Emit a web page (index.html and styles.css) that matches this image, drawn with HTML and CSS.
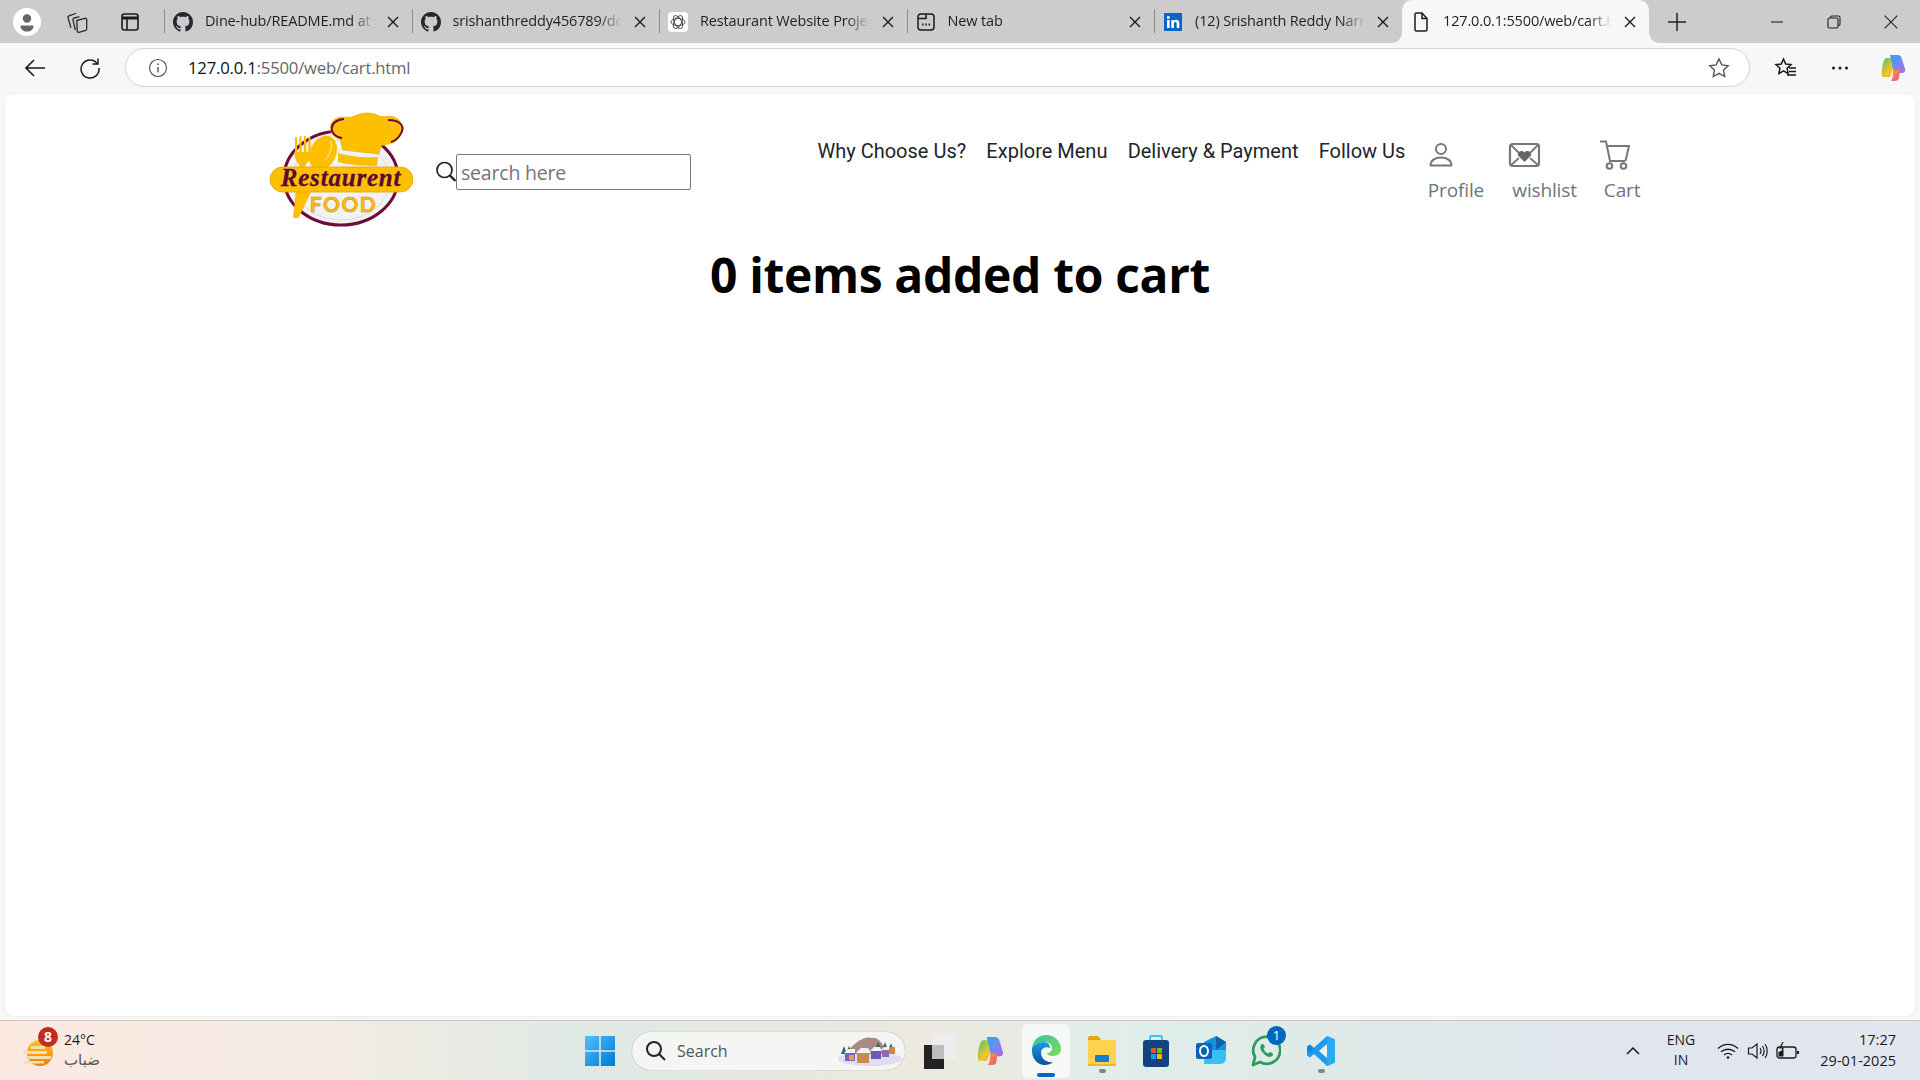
FILE: index.html
```html
<!DOCTYPE html>
<html lang="en">
<head>
<meta charset="utf-8">
<title>Cart</title>
<link rel="stylesheet" href="styles.css">
</head>
<body>
<div class="tabstrip">
  <div class="strip-left">
    <span class="avatar"><svg width="28" height="28" viewBox="0 0 28 28"><circle cx="14" cy="14" r="14" fill="#fff"/><circle cx="14" cy="10.500" r="4.200" fill="#666"/><path d="M7.500 17.500h13c0 4-3 6-6.500 6s-6.500-2-6.500-6z" fill="#666"/></svg></span>
    <svg class="ico" width="22" height="22" viewBox="0 0 22 22" fill="none" stroke="#2a2a2a" stroke-width="1.300" stroke-linecap="round" stroke-linejoin="round"><path d="M10.800 9.500 19 7.300c1-.2 1.700.4 1.700 1.300v9.300c0 .8-.4 1.200-1 1.400l-6.700 2c-1 .2-1.600-.3-1.800-1.200z"/><path d="M13 5.800 8 7c-1 .3-1.300 1-1 2l2.200 9.500"/><path d="M9.500 2.500 3 4.800c-1 .4-1.300 1-1 2l2.800 9.500"/></svg>
    <svg class="ico" width="20" height="20" viewBox="0 0 20 20" fill="none" stroke="#1a1a1a" stroke-width="1.600"><rect x="2" y="2" width="16" height="16" rx="2.500"/><path d="M2 6h16" stroke-width="3"/><path d="M7 6v12"/></svg>
  </div>
  <div class="tab"><i class="sep"></i><svg class="fav" width="20" height="20" viewBox="0 0 16 16"><path fill="#24292f" d="M8 0C3.580 0 0 3.580 0 8c0 3.540 2.290 6.530 5.470 7.590.4.070.55-.17.55-.38 0-.19-.010-.82-.010-1.490-2.010.37-2.530-.49-2.690-.94-.090-.23-.48-.94-.82-1.130-.28-.15-.68-.52-.010-.53.630-.010 1.080.58 1.230.82.720 1.210 1.870.87 2.330.66.070-.52.280-.87.510-1.070-1.780-.2-3.640-.89-3.640-3.950 0-.87.310-1.590.82-2.150-.080-.2-.36-1.020.080-2.120 0 0 .67-.21 2.200.82.640-.18 1.320-.27 2-.27s1.360.090 2 .27c1.530-1.040 2.200-.82 2.200-.82.440 1.100.16 1.920.080 2.120.51.560.82 1.270.82 2.150 0 3.070-1.870 3.750-3.650 3.950.29.250.54.730.54 1.480 0 1.070-.010 1.930-.010 2.200 0 .21.150.46.550.38A8.010 8.010 0 0 0 16 8c0-4.420-3.580-8-8-8z"/></svg><span class="title">Dine-hub/README.md at</span><svg class="x" width="12" height="12" viewBox="0 0 12 12"><path d="M1 1l10 10M11 1 1 11" stroke="#1a1a1a" stroke-width="1.400"/></svg></div>
  <div class="tab"><i class="sep"></i><svg class="fav" width="20" height="20" viewBox="0 0 16 16"><path fill="#24292f" d="M8 0C3.580 0 0 3.580 0 8c0 3.540 2.290 6.530 5.470 7.590.4.070.55-.17.55-.38 0-.19-.010-.82-.010-1.490-2.010.37-2.530-.49-2.690-.94-.090-.23-.48-.94-.82-1.130-.28-.15-.68-.52-.010-.53.630-.010 1.080.58 1.230.82.720 1.210 1.870.87 2.330.66.070-.52.280-.87.510-1.070-1.780-.2-3.640-.89-3.640-3.950 0-.87.310-1.590.82-2.150-.080-.2-.36-1.020.080-2.120 0 0 .67-.21 2.200.82.640-.18 1.320-.27 2-.27s1.360.090 2 .27c1.530-1.040 2.200-.82 2.200-.82.440 1.100.16 1.920.080 2.120.51.560.82 1.270.82 2.150 0 3.070-1.870 3.750-3.650 3.950.29.250.54.730.54 1.480 0 1.070-.010 1.930-.010 2.200 0 .21.150.46.550.38A8.010 8.010 0 0 0 16 8c0-4.420-3.580-8-8-8z"/></svg><span class="title">srishanthreddy456789/do</span><svg class="x" width="12" height="12" viewBox="0 0 12 12"><path d="M1 1l10 10M11 1 1 11" stroke="#1a1a1a" stroke-width="1.400"/></svg></div>
  <div class="tab"><i class="sep"></i><svg class="fav" width="20" height="20" viewBox="0 0 20 20"><rect width="20" height="20" rx="4" fill="#fff"/><g fill="none" stroke="#444" stroke-width=".9"><ellipse cx="10" cy="10" rx="7" ry="3.600"/><ellipse cx="10" cy="10" rx="7" ry="3.600" transform="rotate(60 10 10)"/><ellipse cx="10" cy="10" rx="7" ry="3.600" transform="rotate(120 10 10)"/></g></svg><span class="title">Restaurant Website Projec</span><svg class="x" width="12" height="12" viewBox="0 0 12 12"><path d="M1 1l10 10M11 1 1 11" stroke="#1a1a1a" stroke-width="1.400"/></svg></div>
  <div class="tab"><i class="sep"></i><svg class="fav" width="20" height="20" viewBox="0 0 20 20" fill="none" stroke="#1a1a1a" stroke-width="1.500"><rect x="2" y="2" width="16" height="16" rx="3"/><path d="M2 6.500h8V2"/><path d="M6 12.500h1.500M9.300 12.500h1.500M12.600 12.500h1.500" stroke-width="1.800"/></svg><span class="title">New tab</span><svg class="x" width="12" height="12" viewBox="0 0 12 12"><path d="M1 1l10 10M11 1 1 11" stroke="#1a1a1a" stroke-width="1.400"/></svg></div>
  <div class="tab"><i class="sep"></i><svg class="fav" width="20" height="20" viewBox="0 0 20 20"><rect x="1" y="1" width="18" height="18" fill="#0a66c2"/><path d="M4 8h2.600v8H4zM4 4.300h2.600v2.400H4zM8.300 8h2.500v1.200c.5-.9 1.400-1.400 2.500-1.400 2 0 3 1.200 3 3.500V16h-2.600v-4.200c0-1.100-.4-1.700-1.300-1.700-1 0-1.500.7-1.500 1.800V16H8.300z" fill="#fff"/></svg><span class="title">(12) Srishanth Reddy Narr</span><svg class="x" width="12" height="12" viewBox="0 0 12 12"><path d="M1 1l10 10M11 1 1 11" stroke="#1a1a1a" stroke-width="1.400"/></svg></div>
  <div class="tab active"><svg class="fav" width="20" height="20" viewBox="0 0 20 20" fill="none" stroke="#1a1a1a" stroke-width="1.500"><path d="M4 2.500A1.500 1.500 0 0 1 5.500 1H11l5 5.500v11a1.500 1.500 0 0 1-1.500 1.500h-9A1.500 1.500 0 0 1 4 17.500z"/><path d="M11 1v5.500h5"/></svg><span class="title">127.0.0.1:5500/web/cart.h</span><svg class="x" width="12" height="12" viewBox="0 0 12 12"><path d="M1 1l10 10M11 1 1 11" stroke="#1a1a1a" stroke-width="1.400"/></svg></div>
  <svg class="plus" width="18" height="18" viewBox="0 0 18 18"><path d="M9 0v18M0 9h18" stroke="#222" stroke-width="1.500"/></svg>
  <div class="winbtns">
    <svg width="14" height="14" viewBox="0 0 14 14"><path d="M1 7h12" stroke="#222" stroke-width="1.100"/></svg>
    <svg width="14" height="14" viewBox="0 0 14 14" fill="none" stroke="#222" stroke-width="1.100"><rect x="1" y="3" width="10" height="10" rx="1.500"/><path d="M3.500 3V2.200C3.500 1.500 4 1 4.700 1h6.800C12.300 1 13 1.700 13 2.500v6.800c0 .7-.5 1.200-1.200 1.200H11"/></svg>
    <svg width="14" height="14" viewBox="0 0 14 14"><path d="M.7.700l12.600 12.600M13.300.700.700 13.300" stroke="#222" stroke-width="1.100"/></svg>
  </div>
</div>

<div class="toolbar">
  <svg class="nav-ico back" width="22" height="20" viewBox="0 0 22 20" fill="none" stroke="#1a1a1a" stroke-width="1.600"><path d="M21 10H2M10 2l-8 8 8 8"/></svg>
  <svg class="nav-ico reload" width="22" height="22" viewBox="0 0 22 22" fill="none" stroke="#1a1a1a" stroke-width="1.500"><path d="M18.500 7A9 9 0 1 0 20 11"/><path d="M19 1.500V7h-5.500"/></svg>
  <div class="addr">
    <svg width="20" height="20" viewBox="0 0 20 20" fill="none" stroke="#555" stroke-width="1.200"><circle cx="10" cy="10" r="8.500"/><path d="M10 9v5.500" stroke-width="1.400"/><circle cx="10" cy="6.200" r=".9" fill="#555" stroke="none"/></svg>
    <span class="url"><b>127.0.0.1</b>:5500/web/cart.html</span>
    <svg class="star" width="22" height="22" viewBox="0 0 22 22" fill="none" stroke="#555" stroke-width="1.400"><path d="M11 2l2.800 5.900 6.400.8-4.700 4.400 1.200 6.400L11 16.300l-5.700 3.200 1.200-6.400L1.800 8.700l6.400-.8z"/></svg>
  </div>
  <svg class="favs" width="24" height="22" viewBox="0 0 24 22" fill="none" stroke="#1a1a1a" stroke-width="1.500"><path d="M9.500 2l2.200 5 5.300.6-3.900 3.700 1 5.300-4.600-2.700-4.600 2.700 1-5.300L2 7.600 7.300 7z"/><path d="M15 11h7M15 14.500h7M13 18h9" stroke-width="1.300"/></svg>
  <svg class="more" width="18" height="4" viewBox="0 0 18 4" fill="#1a1a1a"><circle cx="2.500" cy="2" r="1.500"/><circle cx="9" cy="2" r="1.500"/><circle cx="15.500" cy="2" r="1.500"/></svg>
  <svg class="copilot" width="28" height="28" viewBox="0 0 28 28"><defs><linearGradient id="cp1" x1="0" y1="0" x2="1" y2="1"><stop offset="0" stop-color="#2aa6f0"/><stop offset=".5" stop-color="#6a8ef5"/><stop offset="1" stop-color="#c05fe0"/></linearGradient><linearGradient id="cp2" x1="0" y1="0" x2="1" y2="1"><stop offset="0" stop-color="#46c46a"/><stop offset=".6" stop-color="#f5c52e"/><stop offset="1" stop-color="#f58a2e"/></linearGradient><linearGradient id="cp3" x1="0" y1="0" x2="1" y2="1"><stop offset="0" stop-color="#f5a23a"/><stop offset="1" stop-color="#ee4f7e"/></linearGradient></defs><path d="M7 4h7c1.500 0 2.500.8 3 2l-6 17H3C2 16 4 6 7 4z" fill="url(#cp2)"/><path d="M11 1h8c2 0 3 1 4 4l3 10c.5 2-.5 4-3 4h-8z" fill="url(#cp1)"/><path d="M14 16h7l-1 8c-.5 2-2 3-4 3h-4c2-2 2-8 2-11z" fill="url(#cp3)"/></svg>
</div>

<main class="page">
  <header class="site-head">
    <svg class="logo" width="146" height="116" viewBox="0 0 146 116">
      <ellipse cx="73" cy="66" rx="57" ry="47" fill="#f1f2f2" stroke="#6e0a3c" stroke-width="3"/>
      <ellipse cx="73" cy="68" rx="49" ry="40" fill="none" stroke="#e6c9d4" stroke-width=".7"/>
      <g fill="none" stroke="#fdbf00" stroke-width="2.200" stroke-linecap="round"><path d="M28 26v16M32.500 25v17M37 25v17M41.500 26v16"/></g>
      <path d="M26.500 40h16.500c0 6-2 10-5 12l-2 8h-4l-1-8c-3-2-4.500-6-4.500-12z" fill="#fdbf00"/>
      <path d="M28 78h8l-5 28h-6zM36 78h8l-13 27z" fill="#fdbf00"/>
      <ellipse cx="55" cy="41" rx="13" ry="18" fill="#fdbf00" transform="rotate(25 55 41)"/>
      <path d="M62 29c3 4 1 13-5 19" fill="none" stroke="#fff" stroke-width=".7"/>
      <path d="M47 55l5 3-4 8h-6z" fill="#fdbf00"/>
      <path d="M75 38 72 27C60 25 58 6 74 5c5 0 9 1 13-1 7-4 18-4 24 0 4 2 10-1 15 1 12 4 10 22-2 26l-11 3-2 8z" fill="#fdbf00" stroke="#e8a300" stroke-width=".6"/>
      <path d="M70 41c13 4 27 5 40 4l-1 9c-14 0-28-1-39-4z" fill="#fdbf00"/>
      <path d="M74 26C60 24 60 8 76 7" fill="none" stroke="#6e0a3c" stroke-width="2"/>
      <path d="M120 8c13 0 18 7 12 15-2 3-5 6-9 7" fill="none" stroke="#6e0a3c" stroke-width="2"/>
      <rect x="2" y="55" width="143" height="25" rx="12.500" fill="#fdbf00" stroke="#e8a300" stroke-width=".8"/>
      <text x="73" y="74" class="logo-script" text-anchor="middle">Restaurent</text>
      <text x="75.500" y="100" class="logo-food" text-anchor="middle">FOOD</text>
    </svg>
    <div class="search">
      <svg width="22" height="24" viewBox="0 0 22 24" fill="none" stroke="#222" stroke-width="1.700"><circle cx="9.500" cy="10" r="7.500"/><path d="M15 15.500l5.500 5.500" stroke-width="2.400"/></svg>
      <div class="search-box">search here</div>
    </div>
    <nav class="site-nav">
      <a>Why Choose Us?</a>
      <a>Explore Menu</a>
      <a>Delivery &amp; Payment</a>
      <a>Follow Us</a>
    </nav>
    <div class="actions">
      <div class="action a-profile">
        <svg width="26" height="26" viewBox="0 0 26 26" fill="none" stroke="#777" stroke-width="2"><circle cx="13" cy="7" r="5"/><path d="M2.500 23.500c0-5 4.500-8 10.500-8s10.500 3 10.500 8z" stroke-linejoin="round"/></svg>
        <span>Profile</span>
      </div>
      <div class="action a-wish">
        <svg width="32" height="26" viewBox="0 0 32 26" fill="none" stroke="#777" stroke-width="2.200"><rect x="2" y="2" width="29" height="22" rx="2.500"/><path d="M3 3l8 8M30 3l-8 8M3 23l8-7M30 23l-8-7" stroke-width="1.800"/><path d="M16.500 20l-6-6c-2.500-3.500 3-7 6-3.500 3-3.500 8.500 0 6 3.500z" fill="#666" stroke="none"/></svg>
        <span>wishlist</span>
      </div>
      <div class="action a-cart">
        <svg width="30" height="30" viewBox="0 0 30 30" fill="none" stroke="#777" stroke-width="2"><path d="M0 1.500h6l4 19.500h15"/><path d="M6 6h23l-3.500 15"/><circle cx="9.500" cy="26" r="2.800"/><circle cx="23.500" cy="26" r="2.800"/></svg>
        <span>Cart</span>
      </div>
    </div>
  </header>
  <h1 class="cart-title">0 items added to cart</h1>
</main>

<footer class="taskbar">
  <div class="tb-left">
    <div class="weather">
      <svg width="30" height="30" viewBox="0 0 30 30"><defs><linearGradient id="sun" x1="0" y1="0" x2="0" y2="1"><stop offset="0" stop-color="#fbc02d"/><stop offset="1" stop-color="#f57c00"/></linearGradient></defs><circle cx="17" cy="15" r="13" fill="url(#sun)"/><path d="M0 13h24v3H0zM3 18h25v3H3zM1 23h20v2.500H1zM8 8h14v3H8z" fill="#f3dfb0"/></svg>
      <b class="wbadge">8</b>
    </div>
    <div class="wtext"><span>24°C</span><span class="ar">ضباب</span></div>
  </div>
  <div class="tb-center">
    <svg class="win" width="30" height="30" viewBox="0 0 30 30"><defs><linearGradient id="wg" x1="0" y1="0" x2="1" y2="1"><stop offset="0" stop-color="#4cc2ff"/><stop offset="1" stop-color="#0078d4"/></linearGradient></defs><path d="M0 0h14.200v14.200H0zM15.800 0H30v14.200H15.800zM0 15.800h14.200V30H0zM15.800 15.800H30V30H15.800z" fill="url(#wg)"/></svg>
    <div class="tsearch">
      <svg width="21" height="21" viewBox="0 0 21 21" fill="none" stroke="#222" stroke-width="2"><circle cx="9" cy="9" r="7"/><path d="M14 14l6 6"/></svg>
      <span>Search</span>
      <svg class="scene" width="64" height="30" viewBox="0 0 64 30"><ellipse cx="32" cy="23" rx="32" ry="7" fill="#dfdcf3"/><path d="M11 14C18 5 28 0 33 2c6-1 11 4 14 11v5H11z" fill="#a98a80"/><path d="M3 18l3-8 3 8zM8 17l3-7 3 7zM44 14l3-8 3 8zM50 15l3-8 3 8zM38 12l2-6 3 6z" fill="#2c6b60"/><rect x="7" y="17" width="10" height="8" fill="#7a62b5"/><path d="M6 17l4-4h7v4z" fill="#f2f0fa"/><rect x="11" y="19" width="5" height="5" fill="#e5a04a"/><rect x="19" y="16" width="12" height="11" fill="#c58c4c"/><path d="M18 17l5-5h7l3 5z" fill="#f2f0fa"/><rect x="33" y="15" width="10" height="8" fill="#6a5bb0"/><path d="M32 15l4-4h6l2 4z" fill="#f2f0fa"/><rect x="44" y="14" width="7" height="7" fill="#8f6ba8"/><path d="M43 14l3-3h4l2 3z" fill="#f2f0fa"/><rect x="51" y="11" width="6" height="7" fill="#c58c4c"/></svg>
    </div>
    <svg class="tapp t-view" width="32" height="36" viewBox="0 0 32 36"><rect x="8" y="0" width="24" height="25" fill="#f4f4f4"/><rect x="8" y="0" width="24" height="25" fill="#e8e8e8" opacity=".6"/><rect x="0" y="11" width="20" height="24" fill="#222"/><rect x="8" y="11" width="12" height="14" fill="#bdbdbd"/></svg>
    <svg class="tapp t-cop" width="30" height="30" viewBox="0 0 28 28"><path d="M7 4h7c1.500 0 2.500.8 3 2l-6 17H3C2 16 4 6 7 4z" fill="url(#cp2)"/><path d="M11 1h8c2 0 3 1 4 4l3 10c.5 2-.5 4-3 4h-8z" fill="url(#cp1)"/><path d="M14 16h7l-1 8c-.5 2-2 3-4 3h-4c2-2 2-8 2-11z" fill="url(#cp3)"/></svg>
    <div class="tedge">
      <svg width="32" height="32" viewBox="0 0 32 32"><defs><linearGradient id="eg1" x1="0" y1="0" x2="1" y2="1"><stop offset="0" stop-color="#36c5a0"/><stop offset="1" stop-color="#7edc5c"/></linearGradient><linearGradient id="eg2" x1="0" y1="0" x2="0" y2="1"><stop offset="0" stop-color="#1b9de2"/><stop offset="1" stop-color="#0c4f9e"/></linearGradient></defs><path d="M2 14C3 6 9 1 16 1c8 0 15 6 15 14 0 5-4 7-8 7-3 0-6-1-6-3 3 0 5-2 5-5 0-4-4-6-8-6-6 0-10 3-12 6z" fill="url(#eg1)"/><path d="M2 14c2-3 6-6 11-6 4 0 7 2 7 6-4-2-9 0-9 5 0 5 5 10 12 9-2 2-5 3-8 3C7 31 1 24 2 14z" fill="url(#eg2)"/></svg>
      <i class="run-on"></i>
    </div>
    <div class="tstack t-files">
      <svg width="28" height="30" viewBox="0 0 28 30"><path d="M0 2c0-1 1-2 2-2h8l3 4h-13z" fill="#e5a50a"/><rect y="4" width="28" height="26" rx="1" fill="#ffd24d"/><rect x="7" y="19" width="14" height="7" rx="1" fill="#0f7ed4"/><rect y="28" width="28" height="2" fill="#f0b429"/></svg>
      <i class="run-dot"></i>
    </div>
    <svg class="tapp t-store" width="26" height="32" viewBox="0 0 26 32"><path d="M7 6V3c0-1 1-2 2-2h8c1 0 2 1 2 2v3" fill="none" stroke="#36c5f0" stroke-width="2"/><rect y="5" width="26" height="27" rx="3" fill="#14427f"/><rect x="8" y="13" width="5" height="5" fill="#f25022"/><rect x="14" y="13" width="5" height="5" fill="#7fba00"/><rect x="8" y="19" width="5" height="5" fill="#00a4ef"/><rect x="14" y="19" width="5" height="5" fill="#ffb900"/></svg>
    <svg class="tapp t-out" width="32" height="30" viewBox="0 0 32 30"><path d="M8 6 20 0l10 6v16l-10 6H8z" fill="#1490df"/><path d="M20 0l10 6-10 8z" fill="#0f5fb0"/><path d="M8 14h22v8c0 3-2 6-6 6H8z" fill="#38c0f0"/><rect x="0" y="7" width="16" height="16" rx="2" fill="#0a64b8"/><ellipse cx="8" cy="15" rx="4" ry="5" fill="none" stroke="#fff" stroke-width="2"/></svg>
    <div class="tbadged t-wa">
      <svg width="30" height="32" viewBox="0 0 30 32" fill="none"><path d="M2 30l2-8A13.500 13.500 0 1 1 9 27z" stroke="#2e9d5a" stroke-width="2.800" stroke-linejoin="round"/><path d="M10 10c1-1.500 2.500-1.500 3 0l1 2-1.500 2c1 2 2.500 3.500 4.500 4.500l2-1.500 2 1c1.500 1 1.500 2 0 3-2 2-5 1-8-2s-5-6-3-9z" fill="#2e9d5a"/></svg>
      <b class="tb-num">1</b>
    </div>
    <div class="tstack t-vs">
      <svg width="28" height="30" viewBox="0 0 28 30"><path d="M20 0l8 3.500v23L20 30 7 18l-4 3.500L0 19.500v-9L3 8.500 7 12z" fill="#1f9cf0"/><path d="M20 8l-8 7 8 7z" fill="#eef2ee"/><path d="M20 0l8 3.500v23L20 30z" fill="#2aa8f2"/><path d="M20 0 3 17 0 14.500v-4L3 8.500 7 12z" fill="#0f6fc0" opacity=".5"/></svg>
      <i class="run-dot"></i>
    </div>
  </div>
  <div class="tb-right">
    <svg class="chev" width="14" height="8" viewBox="0 0 14 8" fill="none" stroke="#1a1a1a" stroke-width="1.500"><path d="M1 7l6-6 6 6"/></svg>
    <div class="lang"><span>ENG</span><span>IN</span></div>
    <div class="sys">
      <svg width="22" height="18" viewBox="0 0 22 18" fill="none" stroke="#1a1a1a" stroke-width="1.400"><path d="M1 6.500c6-5.500 14-5.500 20 0M4 9.800c4-3.500 10-3.500 14 0M7 13c2.500-2 5.500-2 8 0"/><circle cx="11" cy="15.500" r="1.300" fill="#1a1a1a" stroke="none"/></svg>
      <svg width="22" height="18" viewBox="0 0 22 18" fill="none" stroke="#1a1a1a" stroke-width="1.200"><path d="M1.500 6v6h3.500l5 4V2L5 6z"/><path d="M13 6c1.300 1.800 1.300 4.200 0 6M15.500 4c2 3 2 7 0 10M18 2c3 4 3 10 0 14"/></svg>
      <svg width="24" height="18" viewBox="0 0 24 18" fill="none" stroke="#1a1a1a" stroke-width="1.300"><rect x="1" y="5" width="19" height="11" rx="2.500"/><path d="M22 9v3" stroke-width="2"/><path d="M2.500 14.500V10l5-2v6.500z" fill="#1a1a1a" stroke="none"/><path d="M7 0 4 6h3l-1 4" stroke-width="1.200"/></svg>
    </div>
    <div class="clock"><span>17:27</span><span>29-01-2025</span></div>
  </div>
</footer>
</body>
</html>
```

FILE: styles.css
```css
* { box-sizing: border-box; }
html, body { margin: 0; height: 100%; }
body {
  width: 1920px; height: 1080px; overflow: hidden;
  display: flex; flex-direction: column;
  background: #f7f7f7;
  font-family: "Open Sans", "Noto Sans", sans-serif;
  color: #1a1a1a;
}
svg { display: block; flex: none; }

/* tab strip */
.tabstrip { height: 43px; background: #ccc; display: flex; align-items: center; flex: none; }
.strip-left { width: 164px; height: 100%; display: flex; align-items: center; padding-left: 13px; flex: none; }
.strip-left .ico:nth-child(2) { margin-left: 25px; }
.strip-left .ico:nth-child(3) { margin-left: 32px; }
.tab {
  width: 247.500px; height: 43px; flex: none; position: relative;
  display: flex; align-items: center; padding: 0 13px 0 9px;
  font-size: 14.500px; letter-spacing: -.15px; color: #1f1f1f;
}
.sep { position: absolute; left: 0; top: 9px; height: 24px; width: 1px; background: #8a8a8a; }
.fav { margin-right: 12px; }
.title {
  flex: 1; min-width: 0; white-space: nowrap; padding-bottom: 2px;
  -webkit-mask-image: linear-gradient(to right, #000 86%, transparent 100%);
  mask-image: linear-gradient(to right, #000 86%, transparent 100%);
}
.x { margin-left: 12px; }
.tab.active { background: #f7f7f7; border-radius: 10px 10px 0 0; width: 247px; margin-left: 0.500px; }
.tab.active::before, .tab.active::after {
  content: ""; position: absolute; bottom: 0; width: 10px; height: 10px;
}
.tab.active::before { left: -10px; background: radial-gradient(circle at 0 0, #ccc 9.500px, #f7f7f7 10px); }
.tab.active::after { right: -10px; background: radial-gradient(circle at 100% 0, #ccc 9.500px, #f7f7f7 10px); }
.plus { margin-left: 19px; }
.winbtns { margin-left: auto; display: flex; gap: 43px; padding-right: 22px; }

/* toolbar */
.toolbar { height: 51px; background: #f7f7f7; display: flex; align-items: center; flex: none; padding: 0 0 2px 24px; }
.reload { margin-left: 33px; }
.addr {
  width: 1625px; height: 39px; margin-left: 24px; flex: none;
  background: #fff; border: 1px solid #d4d4d4; border-radius: 20px;
  display: flex; align-items: center; padding: 0 19px 0 22px;
}
.url { margin-left: 20px; font-size: 16.700px; letter-spacing: -.2px; color: #666; }
.url b { font-weight: 400; color: #111; }
.star { margin-left: auto; }
.favs { margin-left: 24px; }
.more { margin-left: 33px; }
.copilot { margin-left: 30px; }

/* page */
.page {
  flex: none; height: 922px; margin: 0 5px; background: #fff;
  border-radius: 8px; box-shadow: 0 0 2px rgba(0,0,0,.12);
}
.site-head { display: flex; align-items: flex-start; padding: 19px 0 0 263px; height: 127px; }
.logo { margin-top: -1px; }
.search { display: flex; align-items: center; margin: 41px 0 0 21px; }
.search-box {
  width: 235px; height: 36px; margin-left: -1px; border: 1px solid #767676; border-radius: 2px;
  font-size: 19.500px; line-height: 36px; padding-left: 4px; color: #757575; letter-spacing: -.2px;
}
.site-nav { display: flex; gap: 20.200px; margin: 24px 0 0 126.500px; font-family: Roboto, sans-serif; font-size: 20px; line-height: 28px; color: #212529; white-space: nowrap; }
.actions { display: flex; margin-top: 29px; color: #6c757d; font-size: 19px; letter-spacing: -.15px; }
.action { display: flex; flex-direction: column; }
.action span { line-height: 28px; }
.a-profile { margin-left: 22.500px; width: 80.500px; }
.a-profile span { margin-top: 8px; }
.a-wish { width: 91.500px; }
.a-wish span { margin-left: 4px; margin-top: 8px; }
.a-cart svg { margin-top: -2px; }
.a-cart span { margin-left: 4px; margin-top: 6px; }
.cart-title { margin: 22px 0 0; text-align: center; font-size: 48px; line-height: 64px; font-weight: 700; color: #000; letter-spacing: -.35px; }

/* taskbar */
.taskbar {
  margin-top: 4px; height: 60px; flex: none; position: relative;
  border-top: 1px solid #c9c6c0;
  display: flex; align-items: center;
  background: linear-gradient(90deg, #fbe9e0 0%, #f6ece4 15%, #e0e9e4 30%, #e6e9e2 42%, #ece9df 48%, #dfeeea 60%, #dfe9e8 70%, #e1e6ee 85%, #e2e7ef 100%);
}
.tb-left { width: 585px; flex: none; display: flex; align-items: center; padding-left: 23px; }
.weather { position: relative; width: 30px; height: 30px; margin-top: 4px; }
.wbadge {
  position: absolute; left: 15px; top: -11px; width: 20px; height: 20px; border-radius: 50%;
  background: #c42b1c; color: #fff; font: 700 14px/20px "Open Sans", sans-serif; text-align: center;
}
.wtext { display: flex; flex-direction: column; margin: -2px 0 0 11px; font-size: 14px; line-height: 21px; color: #1a1a1a; }
.ar { color: #555; font-family: "DejaVu Sans", sans-serif; font-size: 15px; }
.tb-center { width: 768px; flex: none; display: flex; align-items: center; }
.tsearch {
  margin-left: 17px; width: 273px; height: 38px; border-radius: 19px;
  background: #f5f6f3; box-shadow: 0 0 1px rgba(0,0,0,.4);
  display: flex; align-items: center; padding-left: 13px;
  font-size: 16px; color: #555;
}
.tsearch span { margin-left: 11px; }
.scene { margin-left: auto; margin-right: 3px; }
.t-view { margin-left: 19px; margin-top: 2px; }
.t-cop { margin-left: 19px; }
.tedge {
  margin-left: 17px; width: 48px; height: 54px; border-radius: 5px;
  background: rgba(255,255,255,.65); display: flex; flex-direction: column; align-items: center; padding-top: 10px; position: relative;
}
.run-on { position: absolute; bottom: 1px; width: 18px; height: 4px; border-radius: 2px; background: #0067c0; }
.run-dot { position: absolute; bottom: -7px; left: 50%; margin-left: -3.500px; width: 7px; height: 4px; border-radius: 2px; background: #858585; }
.tstack { position: relative; }
.t-files { margin-left: 18px; }
.t-store { margin-left: 27px; }
.t-out { margin-left: 27px; }
.tbadged { position: relative; margin-left: 23px; }
.tb-num {
  position: absolute; left: 16px; top: -9px; width: 19px; height: 19px; border-radius: 50%;
  background: #0067c0; color: #fff; font: 400 13px/19px "Open Sans", sans-serif; text-align: center;
}
.t-vs { margin-left: 26px; }
.tb-right { flex: 1; display: flex; align-items: center; padding-left: 273px; font-size: 14px; color: #1a1a1a; }
.lang { display: flex; flex-direction: column; align-items: center; margin: -2px 0 0 21px; line-height: 20px; width: 40px; }
.sys { display: flex; align-items: center; gap: 7.500px; margin-left: 16px; }
.clock { display: flex; flex-direction: column; align-items: flex-end; margin: -2px 0 0 auto; padding-right: 24px; font-size: 14.500px; line-height: 21px; }
.logo-script { font: italic 700 25px "Liberation Serif", serif; fill: #5c0a35; letter-spacing: .8px; stroke: #5c0a35; stroke-width: .3px; }
.logo-food { font: 700 21px Lato, sans-serif; fill: #fdbf00; stroke: #c98a1a; stroke-width: .5px; letter-spacing: 1.500px; }
```
